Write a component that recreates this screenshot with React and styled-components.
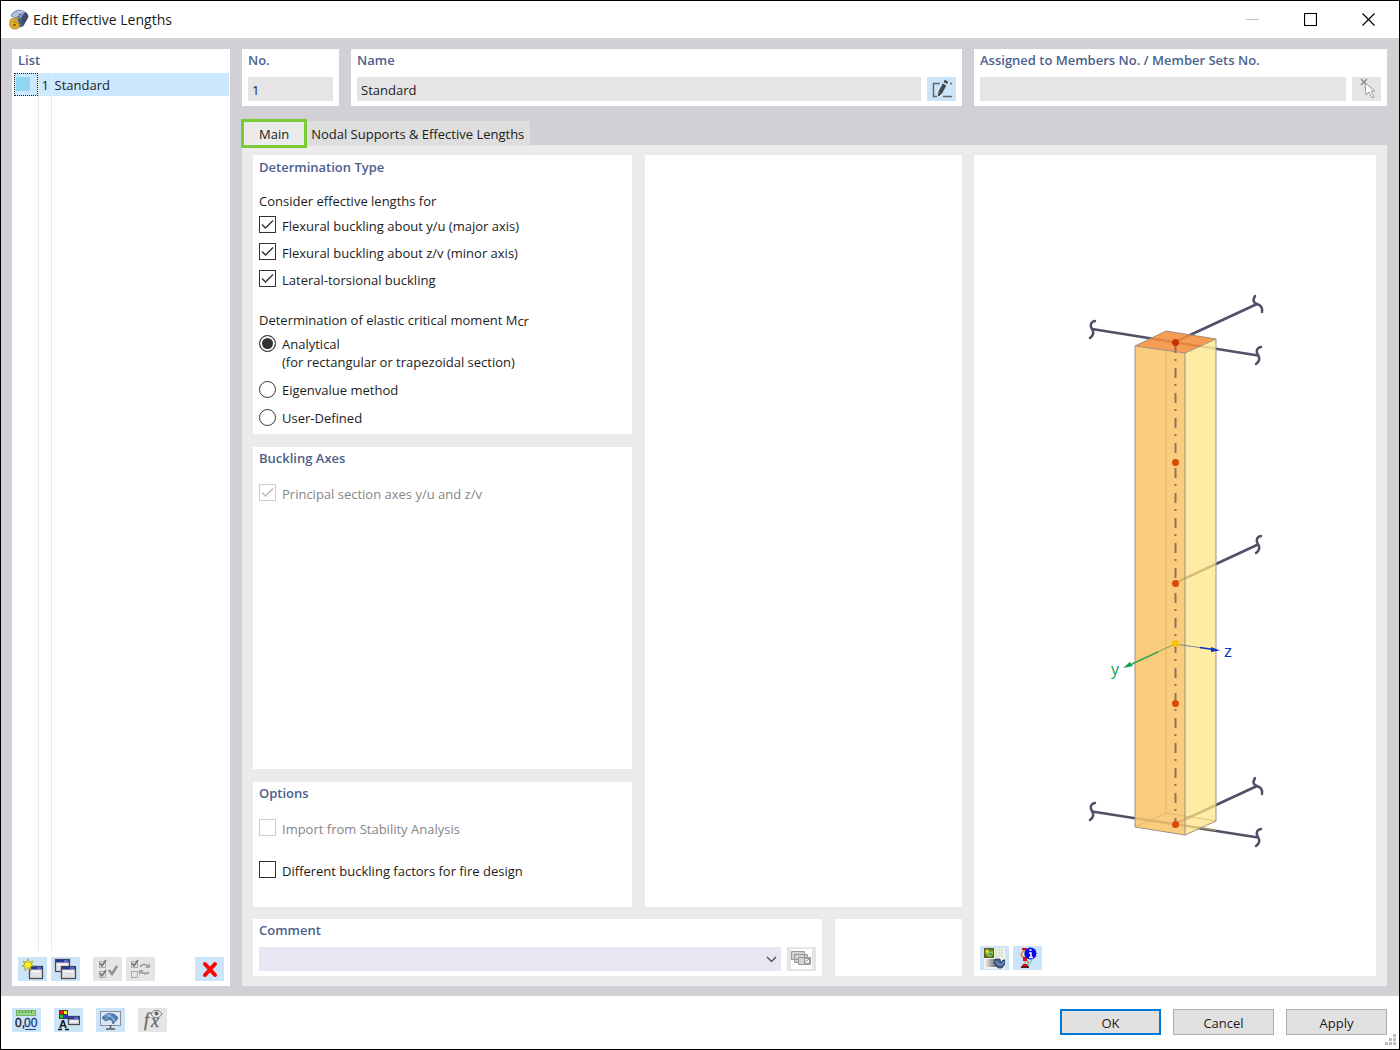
import React, { useState } from "react";
import styled, { createGlobalStyle } from "styled-components";

const GlobalStyle = createGlobalStyle`
  * {
    box-sizing: border-box;
  }
  body {
    margin: 0;
    font-family: "Open Sans", "Noto Sans", sans-serif;
    font-size: 13px;
    line-height: 18px;
    color: #1c1c1c;
  }
  button, input, select {
    font: inherit;
    color: inherit;
    margin: 0;
  }
  svg {
    display: block;
  }
`;

// Window frame
const Window = styled.div`
  min-height: 100vh;
  display: flex;
  flex-direction: column;
  position: relative;
  border: 1px solid #000;
  background-color: #fff;
`;

const TitleBar = styled.header`
  display: flex;
  align-items: center;
  height: 37px;
  padding: 0 2px 0 7px;
`;

const Title = styled.h1`
  flex: 1;
  margin: 0 0 0 4px;
  font-size: 14px;
  font-weight: 400;
`;

const WindowButton = styled.button`
  display: grid;
  place-items: center;
  width: 58px;
  height: 36px;
  padding: 0;
  border: none;
  background: transparent;
`;

const Body = styled.div`
  flex: 1;
  display: grid;
  grid-template-columns: 218px 1fr;
  gap: 12px;
  padding: 11px 12px 10px 11px;
  background-color: #d0d0d5;
`;

const Panel = styled.section`
  display: flex;
  flex-direction: column;
  min-width: 0;
  padding: 2px 6px 5px;
  background-color: #fff;
`;

const Heading = styled.h2`
  margin: 0;
  font-size: 13px;
  line-height: 18px;
  font-weight: 600;
  color: #4c5f8e;
`;

// List on the left
const ListPanel = styled(Panel)`
  padding: 2px 1px 5px 2px;
`;

const ListHeading = styled(Heading)`
  margin: 0 4px 4px;
`;

const ListArea = styled.div`
  flex: 1;
  display: grid;
  margin-bottom: 6px;
`;

const ListTable = styled.table`
  width: 100%;
  height: 100%;
  border-collapse: collapse;
  table-layout: fixed;
`;

const ListRow = styled.tr`
  height: ${(props) => (props.$selected ? "23px" : "auto")};
  background-color: ${(props) => (props.$selected ? "#cce8ff" : "transparent")};
`;

const ListCell = styled.td`
  width: ${(props) => props.$width || "auto"};
  padding: ${(props) => props.$padding || "0"};
  border-right: ${(props) => (props.$width ? "1px solid #e9e9e9" : "none")};
`;

const Swatch = styled.div`
  height: 23px;
  padding: 3px 0 0 1px;
  border: 1px dotted #222;
  &::before {
    content: "";
    display: block;
    width: 14px;
    height: 14px;
    background-color: #8ed7f3;
  }
`;

const ListTools = styled.div`
  display: flex;
  gap: 4px;
  padding: 0 5px 0 4px;
`;

const IconButton = styled.button`
  display: grid;
  place-items: center;
  flex: none;
  width: 29px;
  height: 24px;
  padding: 0;
  margin-left: ${(props) => props.$before || "0"};
  border: none;
  background-color: #cce4f7;
  &:disabled {
    background-color: #e5e5e5;
  }
`;

// Right part
const Main = styled.main`
  display: flex;
  flex-direction: column;
  min-width: 0;
`;

const HeaderRow = styled.div`
  display: grid;
  grid-template-columns: 97px 1fr 413px;
  gap: 12px;
`;

const FieldRow = styled.div`
  display: flex;
  gap: 6px;
  margin-top: 8px;
`;

const TextField = styled.input`
  flex: 1;
  min-width: 0;
  height: 24px;
  padding: 2px 4px 0;
  border: none;
  background-color: #e5e5e5;
`;

const TabList = styled.div`
  display: flex;
  align-items: center;
  height: 29px;
  margin: 13px 0 -3px -1px;
  z-index: 1;
`;

const Tab = styled.button`
  height: ${(props) => (props.$active ? "29px" : "25px")};
  padding: ${(props) => (props.$active ? "0 15px" : "0 6px 0 4px")};
  border: ${(props) => (props.$active ? "3px solid #7acb35" : "none")};
  background-color: ${(props) => (props.$active ? "#ebebeb" : "#dedede")};
`;

const TabPage = styled.div`
  flex: 1;
  display: grid;
  grid-template-columns: 1fr 402px;
  gap: 12px;
  padding: 10px 11px;
  background-color: #ebebeb;
`;

const Settings = styled.div`
  display: flex;
  flex-direction: column;
  gap: 12px;
  min-width: 0;
`;

const Columns = styled.div`
  flex: 1;
  display: grid;
  grid-template-columns: 379fr 317fr;
  gap: 13px;
`;

const Stack = styled.div`
  display: flex;
  flex-direction: column;
  gap: 13px;
`;

const TypePanel = styled(Panel)`
  padding: 3px 6px;
`;

const FillPanel = styled(Panel)`
  flex: 1;
`;

const OptionsPanel = styled(Panel)`
  padding-bottom: 23px;
`;

const CommentRow = styled.div`
  display: grid;
  grid-template-columns: 1fr 127px;
  gap: 13px;
`;

const GroupLabel = styled.div`
  margin-top: 16px;
  & ~ & {
    margin-top: 18px;
  }
  sub {
    font-size: 13px;
    line-height: 0;
    vertical-align: -1px;
  }
`;

const Choices = styled.div`
  display: flex;
  flex-direction: column;
  margin-top: ${(props) => props.$top || "2px"};
  gap: ${(props) => props.$gap || "0"};
`;

const Choice = styled.label`
  display: flex;
  align-items: center;
  gap: 6px;
  min-height: 27px;
  color: ${(props) => (props.$disabled ? "#868686" : "inherit")};
`;

const TallChoice = styled(Choice)`
  align-items: flex-start;
  padding: 1px 0 4px;
`;

const Mark = styled.span`
  display: grid;
  & > * {
    grid-area: 1 / 1;
  }
  svg {
    pointer-events: none;
  }
`;

const CheckBox = styled(Mark)`
  margin-bottom: 2px;
`;

const CheckInput = styled.input`
  appearance: none;
  width: 17px;
  height: 17px;
  border: 1px solid #333;
  background-color: #fff;
  &:disabled {
    border-color: #ccc;
  }
`;

const RadioInput = styled.input`
  appearance: none;
  width: 17px;
  height: 17px;
  border: 1px solid #333;
  border-radius: 50%;
  background-color: #fff;
  &:checked {
    background-color: #333;
    box-shadow: inset 0 0 0 2px #fff;
  }
`;

const ComboBox = styled(Mark)`
  flex: 1;
  align-items: center;
  svg {
    justify-self: end;
    margin-right: 4px;
  }
`;

const Combo = styled.select`
  appearance: none;
  height: 24px;
  padding: 0 4px;
  border: none;
  border-radius: 0;
  background-color: #e6e7f2;
`;

// Preview of the member
const PreviewPanel = styled(Panel)`
  padding: 40px 6px 6px;
`;

const Drawing = styled.div`
  flex: 1;
  display: grid;
  place-items: center;
`;

const PreviewTools = styled.div`
  display: flex;
  gap: 4px;
`;

const Footer = styled.footer`
  display: flex;
  align-items: flex-start;
  gap: 13px;
  height: 53px;
  padding: 12px 12px 0 11px;
`;

const FooterButtons = styled.div`
  display: flex;
  gap: 12px;
  margin: 1px 0 0 auto;
`;

const PushButton = styled.button`
  width: 101px;
  height: 26px;
  padding: 2px 0 0;
  border: ${(props) => (props.$primary ? "2px solid #0078d7" : "1px solid #adadad")};
  background-color: #e1e1e1;
`;

const Grip = styled.svg`
  position: absolute;
  right: 3px;
  bottom: 4px;
`;

// Icons
const AppIcon = () => (
  <svg width="21" height="21" viewBox="0 0 21 21">
    <path d="M3 7c1-3 4-5 8-6l6 2c2 1 3 3 3 5l-5 9-4 1C12 12 9 8 3 7z" fill="#4f648d" stroke="#3c4a69" strokeWidth=".8" />
    <path d="M3 7c1-3 4-5 8-6l6 2c-5 1-8 3-9 6z" fill="#9fb3d6" />
    <path d="M17 3c2 1 3 3 3 5l-5 9-2-5z" fill="#3e4b68" />
    <path d="m6 4 6 3M9 2l6 3M5 6l6 3M12 9c1-3 3-5 5-6M8 8c1-3 4-5 7-6" fill="none" stroke="#dbe4f4" strokeWidth=".7" />
    <path d="M2 13c0-3 2-4 5-4h3v3H6v1h2c5 0 5 7-1 7-4 0-6-3-5-7z" fill="#dfae26" stroke="#8c6a16" strokeWidth=".7" />
    <path d="M5 15h3v2H5z" fill="#8c6a16" />
  </svg>
);

const EditIcon = () => (
  <svg width="22" height="20" viewBox="0 0 22 20" fill="none" stroke="#666" strokeWidth="1.500">
    <path d="M9 4.500H2.500v13H6M12 17.500h9M19 4.500h2" />
    <path d="m9 14 4.500-8.500" stroke="#484848" strokeWidth="4" />
    <path d="m14.300 4 1.200-2.300" stroke="#484848" strokeWidth="4" />
    <path d="m7.500 14 2.500 1-2.500 2z" fill="#484848" stroke="#484848" strokeWidth="1" />
  </svg>
);

const PickIcon = () => (
  <svg width="22" height="22" viewBox="0 0 22 22">
    <path d="m5 1 6 6M11 1 5 7" stroke="#8e8e8e" strokeWidth="1.500" />
    <path d="m9 5 1 12 3-3 3 6 2-1-3-6h4z" fill="#fff" stroke="#999" />
  </svg>
);

const MiniWindow = ({ x, y, w = 14, h = 12 }) => (
  <g>
    <rect x={x + 0.5} y={y + 0.5} width={w - 1} height={h - 1} fill="#e2e2e5" stroke="#4d4d50" strokeWidth="1.300" />
    <rect x={x + 0.5} y={y + 0.5} width={w - 1} height="3" fill="#27398f" />
    <path d={`M${x + w - 6} ${y + 2}h4`} stroke="#8f9fe6" />
    <path d={`M${x + 2} ${y + 5.5}h${w - 5}`} stroke="#fff" />
  </g>
);

const NewIcon = () => (
  <svg width="23" height="22" viewBox="0 0 23 22">
    <MiniWindow x={8} y={8} w={14} h={13} />
    <path d="m7 1 1.500 3.500L12 3l-2 3.500 3 1.500-3.500.500.500 4-3-3-3 3V8.500L1 8l3-2-2-3 3.500 1.500z" fill="#fff01f" stroke="#9a9125" strokeWidth=".8" />
  </svg>
);

const CopyIcon = () => (
  <svg width="23" height="22" viewBox="0 0 23 22">
    <MiniWindow x={1} y={1} w={15} h={13} />
    <MiniWindow x={7} y={8} w={15} h={13} />
  </svg>
);

const CheckAllIcon = () => (
  <svg width="22" height="20" viewBox="0 0 22 20" fill="none" stroke="#aaa">
    <rect x="2.500" y="2.500" width="6" height="6" />
    <rect x="2.500" y="12.500" width="6" height="6" />
    <path d="m3 4 2 3 4-6M3 14l2 3 4-6" stroke="#707070" strokeWidth="1.500" />
    <path d="m12 11 3 4 5-8" stroke="#929292" strokeWidth="2.500" />
  </svg>
);

const InvertIcon = () => (
  <svg width="24" height="20" viewBox="0 0 24 20" fill="none" stroke="#aaa">
    <rect x="2.500" y="2.500" width="6" height="6" />
    <rect x="2.500" y="12.500" width="6" height="6" />
    <path d="m3 4 2 3 4-6" stroke="#707070" strokeWidth="1.500" />
    <path d="M11 8c2-3 5-3 8-1M20 13c-2 2-5 2-8 0" stroke="#a2a2a2" strokeWidth="2" />
    <path d="m21 4v5h-5zM10 16v-5h5z" fill="#a2a2a2" stroke="none" />
  </svg>
);

const DeleteIcon = () => (
  <svg width="18" height="18" viewBox="0 0 18 18">
    <path d="m4 4 10 11M14 4 4 15" stroke="#fb0505" strokeWidth="4" strokeLinecap="round" />
  </svg>
);

const StackIcon = () => (
  <svg width="21" height="20" viewBox="0 0 21 20" fill="#d2d2d2" stroke="#989898">
    <path d="M0 0h21v20H0z" fill="#fff" stroke="none" />
    <path d="M.500 2.500h13v8h-13zM3.500 5.500h13v8h-13z" />
    <path d="M7.500 8.500h12v7h-12z" />
    <path d="M13.500 9.500h5v5h-5z" fill="#f5f5f5" />
    <path d="m14 13 4-3" />
  </svg>
);

const RenderIcon = () => (
  <svg width="21" height="21" viewBox="0 0 21 21">
    <defs>
      <linearGradient id="fade" x1="1" x2="0">
        <stop offset="0" stopColor="#222" />
        <stop offset="1" stopColor="#fff" />
      </linearGradient>
    </defs>
    <rect width="21" height="21" fill="#f4f6f1" />
    <path d="M10 2h10M10 5h10M10 8h10M12 0v10M15 0v10M18 0v10" stroke="#c9dab9" strokeWidth=".7" />
    <rect x=".5" y=".5" width="9" height="9" fill="#56872d" stroke="#6a5526" />
    <path d="M1 4c3-3 5 1 8-1v3L6 9 3 7z" fill="#9ac73b" />
    <circle cx="3" cy="3" r="1.500" fill="#f2d429" />
    <path d="M5 5h3v2H5z" fill="#2b8fbd" />
    <rect x="0" y="11" width="13" height="8" fill="url(#fade)" opacity=".7" />
    <path d="M11 11h5l1 4 2-3h2v4l-3 4h-4l-4-5z" fill="#3f6292" stroke="#223b63" strokeWidth=".8" />
    <path d="m12 13 2 3 3 1 3-3" fill="none" stroke="#8fafd8" />
  </svg>
);

const InfoIcon = () => (
  <svg width="18" height="22" viewBox="0 0 18 22">
    <path d="M6 3C0 7 2 9 6 12s5 5 1 8" fill="none" stroke="#f27525" strokeWidth="1.500" />
    <path d="M13 12c-1 4-3 5-5 7" fill="none" stroke="#6cd4e4" strokeWidth="1.500" />
    <path d="M6 2v17" stroke="#999" />
    <path d="M3 1h5v2H3zM4 10h4v4H4zM4 17h4l2 4H2z" fill="#cf1420" />
    <path d="M2 20h8" stroke="#4c1010" strokeWidth="1.500" />
    <circle cx="11.500" cy="6.500" r="6" fill="#0808e6" />
    <path d="M10 6h2v4M10 10.500h4" fill="none" stroke="#fff" strokeWidth="1.500" />
    <circle cx="11.500" cy="3" r="1.100" fill="#fff" />
  </svg>
);

const UnitsIcon = () => (
  <svg width="23" height="22" viewBox="0 0 23 22">
    <rect x="1.500" y="1.500" width="19" height="5" fill="#93d784" stroke="#75b567" />
    <path d="M4.500 2v2M7.500 2v2M10.500 2v2M13.500 2v2M16.500 2v2" stroke="#4f8e44" />
    <text x="0" y="18" fontSize="12" fontFamily="Liberation Sans, sans-serif" fill="#161616" stroke="#161616" strokeWidth=".3">0,</text>
    <text x="9" y="18" fontSize="12" fontFamily="Liberation Sans, sans-serif" fill="#1d3c80" stroke="#1d3c80" strokeWidth=".3">00</text>
    <path d="M10 20.500h11" stroke="#274784" />
  </svg>
);

const DisplayIcon = () => (
  <svg width="23" height="22" viewBox="0 0 23 22">
    <rect x="2" y="1" width="9" height="9" fill="#4b3d37" />
    <path d="M3 2h3v3H3z" fill="#f01a1a" />
    <path d="M7 2h3v3H7z" fill="#ffed18" />
    <path d="M3 6h3v3H3z" fill="#24bf2a" />
    <path d="M7 6h3v3H7z" fill="#2735e3" />
    <text x="2" y="19" fontSize="11" fontWeight="700" fontFamily="Liberation Sans, sans-serif" fill="#111">A</text>
    <path d="M1 20.500h4M8 20.500h4" stroke="#111" strokeWidth="1.500" />
    <path d="M10 10h3" stroke="#555" />
    <MiniWindow x={11} y={7} w={12} h={9} />
  </svg>
);

const ScreenIcon = () => (
  <svg width="23" height="22" viewBox="0 0 23 22">
    <rect x="1.500" y="2.500" width="20" height="14" fill="#d8e8f5" stroke="#858d98" />
    <path d="M11.500 16v3M7 20h9" stroke="#555" strokeWidth="1.500" />
    <path d="M3 9c4-6 12-6 16 0l-5 6c0-4-4-6-7-3z" fill="#4d7eb6" stroke="#31577f" strokeWidth=".8" />
    <path d="M7 5c5 1 7 3 9 7M13 4c-3 2-5 4-6 7M5 7c5-1 9 1 10 6" fill="none" stroke="#a9caea" strokeWidth=".7" />
  </svg>
);

const FormulaIcon = () => (
  <svg width="23" height="22" viewBox="0 0 23 22">
    <text x="3" y="17" fontSize="18" fontStyle="italic" fontFamily="Liberation Serif, serif" fill="#696969" stroke="#696969" strokeWidth=".3">f</text>
    <text x="10" y="18" fontSize="18" fontStyle="italic" fontFamily="Liberation Serif, serif" fill="#696969" stroke="#696969" strokeWidth=".3">x</text>
    <path d="M10 5c3-5 8-5 11 0-3 5-8 5-11 0z" fill="#e8e8e8" stroke="#777" />
    <circle cx="15.500" cy="4.500" r="2" fill="#666" />
  </svg>
);

const CheckMark = ({ color }) => (
  <svg width="17" height="17" viewBox="0 0 17 17" fill="none" stroke={color} strokeWidth="1.400">
    <path d="m3 8.500 3.500 3.500L14 4.500" />
  </svg>
);

// Connected members and their torn ends
const members = [
  { from: [1092, 329], to: [1258, 355.5] },
  { from: [1175, 342], to: [1257, 304] },
  { from: [1175, 583], to: [1258, 544.5] },
  { from: [1092, 811.5], to: [1258, 837.5] },
  { from: [1175, 824], to: [1257, 786] },
];
const breaks = [
  { x: 1092, y: 329 },
  { x: 1258, y: 355 },
  { x: 1257, y: 304, flip: true },
  { x: 1258, y: 544 },
  { x: 1092, y: 811 },
  { x: 1258, y: 837 },
  { x: 1257, y: 786, flip: true },
];
const nodes = [342, 462, 583, 703, 824];

const MemberDrawing = () => (
  <svg width="200" height="572" viewBox="1075 285 200 572" fill="none">
    <g stroke="#515067" strokeWidth="2.600">
      {members.map(({ from, to }, index) => (
        <path key={index} d={`M${from.join(" ")}L${to.join(" ")}`} />
      ))}
    </g>
    <g stroke="#515067" strokeWidth="2.500" strokeLinecap="round">
      {breaks.map(({ x, y, flip }, index) => (
        <path
          key={index}
          d={
            flip
              ? `M${x - 2} ${y - 8}c-3 5-1 7 2 8s6 3 5 8`
              : `M${x + 3} ${y - 8}c-5 1-5 5-3 8s2 6-2 9`
          }
        />
      ))}
    </g>
    <path d="M1135 346l50 7v482l-50-8z" fill="#fac873" fillOpacity=".93" />
    <path d="M1185 353l31-14v482l-31 14z" fill="#ffe995" fillOpacity=".86" />
    <path d="M1135 346l31-15 50 8-31 14z" fill="#f58d39" fillOpacity=".87" />
    <path d="M1166 336v477M1135 827l31-14 50 8" stroke="#d4ae68" strokeOpacity=".65" />
    <path d="M1175 824l-40-6M1175 824l41-19M1175 824l41 6M1175 583l41-19" stroke="#c9ae6c" strokeOpacity=".6" strokeWidth="2" />
    <path d="M1135 346v481l50 8 31-14V339l-50-8-31 15 50 7 31-14M1185 353v482" stroke="#a48d81" />
    <path d="M1175.500 342v482" stroke="#95705b" strokeWidth="2" strokeDasharray="10 6 2 7" strokeDashoffset="-1" />
    {nodes.map((y) => (
      <circle key={y} cx="1175.500" cy={y + 0.5} r="3.500" fill={y === 342 ? "#c92f00" : "#d84807"} />
    ))}
    <path d="M1175 644l-33 15" stroke="#78a44f" />
    <path d="M1158 652l-26 12" stroke="#3da551" strokeWidth="1.500" />
    <path d="M1123 668l7-6 3 4z" fill="#0ca34a" />
    <path d="M1175 644l28 4" stroke="#7d8599" />
    <path d="M1200 647.500l13 2" stroke="#0b35bd" strokeWidth="1.500" />
    <path d="M1220 650.500l-9-3.500v5z" fill="#0b35bd" />
    <circle cx="1175.500" cy="643.500" r="3.500" fill="#f9c20d" />
    <text x="1111" y="675" fontSize="16" fill="#0ca34a">y</text>
    <text x="1224" y="657" fontSize="17" fill="#0b35bd">z</text>
  </svg>
);

const CheckChoice = ({ label, checked, disabled, onChange }) => (
  <Choice $disabled={disabled}>
    <CheckBox>
      <CheckInput type="checkbox" checked={checked} disabled={disabled} onChange={onChange} />
      {checked && <CheckMark color={disabled ? "#bbb" : "#333"} />}
    </CheckBox>
    <span>{label}</span>
  </Choice>
);

const App = () => {
  const [checks, setChecks] = useState({
    major: true,
    minor: true,
    lateral: true,
    principal: true,
    stability: false,
    fire: false,
  });
  const [method, setMethod] = useState("analytical");
  const [tab, setTab] = useState("main");

  const check = (name) => ({
    checked: checks[name],
    onChange: () => setChecks({ ...checks, [name]: !checks[name] }),
  });

  const radio = (name) => ({
    type: "radio",
    name: "method",
    checked: method === name,
    onChange: () => setMethod(name),
  });

  return (
    <>
      <GlobalStyle />
      <Window>
        <TitleBar>
          <AppIcon />
          <Title>Edit Effective Lengths</Title>
          <WindowButton aria-label="Minimize" disabled>
            <svg width="13" height="13"><path d="M0 6.500h13" stroke="#c4c4c4" /></svg>
          </WindowButton>
          <WindowButton aria-label="Maximize">
            <svg width="13" height="13"><path d="M.5.5h12v12H.5z" fill="none" stroke="#000" strokeWidth="1.200" /></svg>
          </WindowButton>
          <WindowButton aria-label="Close">
            <svg width="13" height="13"><path d="m.5.5 12 12M12.500.5l-12 12" stroke="#000" strokeWidth="1.200" /></svg>
          </WindowButton>
        </TitleBar>

        <Body>
          <ListPanel>
            <ListHeading>List</ListHeading>
            <ListArea>
              <ListTable>
                <tbody>
                  <ListRow $selected>
                    <ListCell $width="24px"><Swatch /></ListCell>
                    <ListCell $width="13px" $padding="0 0 0 3px">1</ListCell>
                    <ListCell $padding="0 0 0 3px">Standard</ListCell>
                  </ListRow>
                  <ListRow>
                    <ListCell $width="24px" />
                    <ListCell $width="13px" />
                    <ListCell />
                  </ListRow>
                </tbody>
              </ListTable>
            </ListArea>
            <ListTools>
              <IconButton aria-label="New"><NewIcon /></IconButton>
              <IconButton aria-label="Copy"><CopyIcon /></IconButton>
              <IconButton aria-label="Select all" $before="9px" disabled><CheckAllIcon /></IconButton>
              <IconButton aria-label="Invert selection" disabled><InvertIcon /></IconButton>
              <IconButton aria-label="Delete" $before="auto"><DeleteIcon /></IconButton>
            </ListTools>
          </ListPanel>

          <Main>
            <HeaderRow>
              <Panel>
                <Heading as="label" htmlFor="number">No.</Heading>
                <FieldRow>
                  <TextField id="number" defaultValue="1" readOnly />
                </FieldRow>
              </Panel>
              <Panel>
                <Heading as="label" htmlFor="name">Name</Heading>
                <FieldRow>
                  <TextField id="name" defaultValue="Standard" readOnly />
                  <IconButton aria-label="Edit name"><EditIcon /></IconButton>
                </FieldRow>
              </Panel>
              <Panel>
                <Heading as="label" htmlFor="assigned">Assigned to Members No. / Member Sets No.</Heading>
                <FieldRow>
                  <TextField id="assigned" readOnly />
                  <IconButton aria-label="Pick members" disabled><PickIcon /></IconButton>
                </FieldRow>
              </Panel>
            </HeaderRow>

            <TabList role="tablist">
              <Tab role="tab" aria-selected={tab === "main"} $active={tab === "main"} onClick={() => setTab("main")}>
                Main
              </Tab>
              <Tab role="tab" aria-selected={tab === "nodal"} $active={tab === "nodal"} onClick={() => setTab("nodal")}>
                Nodal Supports &amp; Effective Lengths
              </Tab>
            </TabList>

            <TabPage>
              <Settings>
                <Columns>
                  <Stack>
                    <TypePanel>
                      <Heading>Determination Type</Heading>
                      <GroupLabel>Consider effective lengths for</GroupLabel>
                      <Choices>
                        <CheckChoice label="Flexural buckling about y/u (major axis)" {...check("major")} />
                        <CheckChoice label="Flexural buckling about z/v (minor axis)" {...check("minor")} />
                        <CheckChoice label="Lateral-torsional buckling" {...check("lateral")} />
                      </Choices>
                      <GroupLabel>
                        Determination of elastic critical moment M<sub>cr</sub>
                      </GroupLabel>
                      <Choices $top="5px" $gap="1px">
                        <TallChoice>
                          <RadioInput {...radio("analytical")} />
                          <span>
                            Analytical
                            <br />
                            (for rectangular or trapezoidal section)
                          </span>
                        </TallChoice>
                        <Choice>
                          <RadioInput {...radio("eigenvalue")} />
                          <span>Eigenvalue method</span>
                        </Choice>
                        <Choice>
                          <RadioInput {...radio("user")} />
                          <span>User-Defined</span>
                        </Choice>
                      </Choices>
                    </TypePanel>
                    <FillPanel>
                      <Heading>Buckling Axes</Heading>
                      <Choices $top="13px">
                        <CheckChoice label="Principal section axes y/u and z/v" disabled {...check("principal")} />
                      </Choices>
                    </FillPanel>
                    <OptionsPanel>
                      <Heading>Options</Heading>
                      <Choices $top="13px" $gap="15px">
                        <CheckChoice label="Import from Stability Analysis" disabled {...check("stability")} />
                        <CheckChoice label="Different buckling factors for fire design" {...check("fire")} />
                      </Choices>
                    </OptionsPanel>
                  </Stack>
                  <Panel />
                </Columns>
                <CommentRow>
                  <Panel>
                    <Heading as="label" htmlFor="comment">Comment</Heading>
                    <FieldRow>
                      <ComboBox>
                        <Combo id="comment">
                          <option></option>
                        </Combo>
                        <svg width="11" height="7" viewBox="0 0 11 7" fill="none" stroke="#444" strokeWidth="1.200">
                          <path d="m1 1 4.500 4.500L10 1" />
                        </svg>
                      </ComboBox>
                      <IconButton aria-label="Comment library" disabled><StackIcon /></IconButton>
                    </FieldRow>
                  </Panel>
                  <Panel />
                </CommentRow>
              </Settings>

              <PreviewPanel>
                <Drawing>
                  <MemberDrawing />
                </Drawing>
                <PreviewTools>
                  <IconButton aria-label="Rendering"><RenderIcon /></IconButton>
                  <IconButton aria-label="Information"><InfoIcon /></IconButton>
                </PreviewTools>
              </PreviewPanel>
            </TabPage>
          </Main>
        </Body>

        <Footer>
          <IconButton aria-label="Units"><UnitsIcon /></IconButton>
          <IconButton aria-label="Display properties"><DisplayIcon /></IconButton>
          <IconButton aria-label="View"><ScreenIcon /></IconButton>
          <IconButton aria-label="Formula" disabled><FormulaIcon /></IconButton>
          <FooterButtons>
            <PushButton $primary>OK</PushButton>
            <PushButton>Cancel</PushButton>
            <PushButton>Apply</PushButton>
          </FooterButtons>
        </Footer>
        <Grip width="11" height="11" viewBox="0 0 11 11" fill="#bdbdbd">
          <path d="M8 0h3v3H8zM4 4h3v3H4zM8 4h3v3H8zM0 8h3v3H0zM4 8h3v3H4zM8 8h3v3H8z" />
        </Grip>
      </Window>
    </>
  );
};

export default App;
